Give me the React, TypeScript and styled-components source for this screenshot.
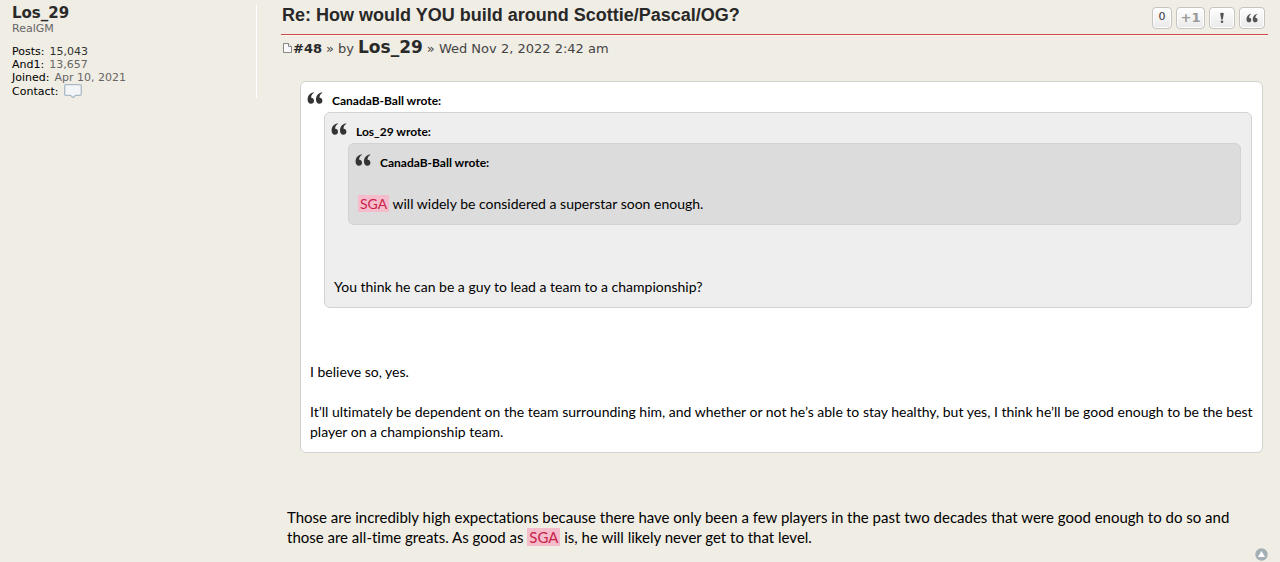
import React from "react";
import styled, { createGlobalStyle } from "styled-components";

const GlobalStyle = createGlobalStyle`
  *, *::before, *::after { box-sizing: border-box; }
  body {
    margin: 0;
    background: #f0ede4;
    color: #000;
    font-family: Verdana, "DejaVu Sans", sans-serif;
    font-size: 11px;
  }
`;

const Post = styled.article`
  display: flex;
  align-items: flex-start;
  gap: 24px;
  padding: 5px 12px 0;
`;

const Profile = styled.aside`
  flex: 0 0 245px;
  border-right: 1px solid #fff;
  color: #666;
`;

const UserLink = styled.a<{ $size: number }>`
  font-size: ${(p) => p.$size}px;
  font-weight: bold;
  color: #2a2a2a;
  text-decoration: none;
`;

const ProfileName = styled.div`
  line-height: 16px;
`;

const Rank = styled.div`
  line-height: 11px;
  margin-bottom: 11px;
`;

const Facts = styled.dl`
  margin: 0;
`;

const Fact = styled.div`
  display: flex;
  align-items: center;
  gap: 5px;
  line-height: 13px;
`;

const Label = styled.dt`
  color: #000;
`;

const Value = styled.dd<{ $dark?: boolean }>`
  margin: 0;
  color: ${(p) => (p.$dark ? "#333" : "#666")};
`;

const IconLink = styled.a`
  display: flex;
  color: inherit;
`;

const Body = styled.div`
  flex: 1;
  min-width: 0;
`;

const Header = styled.header`
  display: flex;
  justify-content: space-between;
  align-items: flex-start;
  height: 30px;
  padding-left: 1px;
  border-bottom: 1px solid #cc4a48;
  box-shadow: 0 1px 0 #faf8f3;
`;

const Title = styled.h3`
  margin: 0;
  font: bold 18px/20px Arial, "Liberation Sans", sans-serif;
  color: #282828;
`;

const Actions = styled.div`
  display: flex;
  gap: 4px;
  padding: 2px 3px 0 0;
`;

const ActionButton = styled.button<{ $width: number }>`
  display: flex;
  align-items: center;
  justify-content: center;
  width: ${(p) => p.$width}px;
  height: 22px;
  padding: 0;
  border: 1px solid #c7c3bf;
  border-radius: 4px;
  background: linear-gradient(#fff, #e9e9e9);
  box-shadow: inset 0 0 0 1px #fff;
  font: 11px/16px "DejaVu Sans", sans-serif;
  color: #333;
`;

const Count = styled.span`
  padding-bottom: 2px;
`;

const PlusOne = styled.strong`
  font-size: 13px;
  color: #999;
`;

const Byline = styled.p`
  display: flex;
  align-items: baseline;
  margin: 0;
  padding-left: 2px;
  line-height: 24px;
  font-size: 13px;
  color: #444;
`;

const BylineText = styled.span`
  margin: 0 4px;
`;

const Content = styled.div`
  padding: 20px 5px 0 6px;
  font: 15px/20px "Trebuchet MS", Lato, sans-serif;
  font-variant-ligatures: none;
`;

const Quote = styled.blockquote<{ $tone: string }>`
  margin: 0;
  padding: 8px 6px 10px 9px;
  border: 1px solid #d2d2d2;
  border-radius: 6px;
  background: ${(p) => p.$tone};
  font-size: 14px;

  & & {
    margin: 0 4px 0 14px;
  }
`;

const OuterQuote = styled.div`
  margin-left: 13px;
`;

const Cite = styled.cite`
  display: flex;
  gap: 9px;
  line-height: 22px;
  font-size: 12px;
  font-style: normal;
  font-weight: bold;
  margin-left: -3px;
`;

const Paragraph = styled.p<{ $before: number }>`
  margin: ${(p) => p.$before}px 0 0;
`;

const Marked = styled.mark`
  padding: 0 2px;
  background: #f5bccb;
  color: #c8234a;
`;

const PageTop = styled.div`
  display: flex;
  justify-content: flex-end;
  padding-top: 1px;
`;

const QuoteMark = ({ size, color }: { size: number; color: string }) => (
  <svg width={size} height={size} viewBox="0 0 16 16" fill={color} aria-hidden="true">
    <path d="M6.600 2.200C2.800 3 .6 5.700 .6 9.600c0 2.500 1.200 4.200 3.300 4.200 1.800 0 3.100-1.300 3.100-3.100 0-1.700-1.200-2.900-2.800-2.900-.2-2 .8-3.800 2.700-4.700z" />
    <path d="M15 2.200C11.200 3 9 5.700 9 9.600c0 2.500 1.200 4.200 3.300 4.200 1.800 0 3.100-1.300 3.100-3.100 0-1.700-1.200-2.900-2.800-2.900-.2-2 .8-3.800 2.700-4.700z" />
  </svg>
);

const QuoteAuthor = ({ name }: { name: string }) => (
  <Cite>
    <QuoteMark size={16} color="#333" />
    {name} wrote:
  </Cite>
);

export default function App() {
  return (
    <>
      <GlobalStyle />
      <Post>
        <Profile>
          <ProfileName>
            <UserLink href="#profile" $size={15}>Los_29</UserLink>
          </ProfileName>
          <Rank>RealGM</Rank>
          <Facts>
            <Fact><Label>Posts:</Label><Value $dark>15,043</Value></Fact>
            <Fact><Label>And1:</Label><Value>13,657</Value></Fact>
            <Fact><Label>Joined:</Label><Value>Apr 10, 2021</Value></Fact>
            <Fact>
              <Label>Contact:</Label>
              <Value>
                <IconLink href="#contact" aria-label="Contact Los_29">
                  <svg width="18" height="14" viewBox="0 0 18 14">
                    <path d="M2 .7h14q1.300 0 1.300 1.300v8q0 1.300-1.300 1.300h-4.500L9.500 13.300h-1L6.500 11.300H2Q.7 11.300 .7 10V2Q.7 .7 2 .7z" fill="#f3f5f6" stroke="#a9bbc7" strokeWidth="1.300" />
                  </svg>
                </IconLink>
              </Value>
            </Fact>
          </Facts>
        </Profile>
        <Body>
          <Header>
            <Title>Re: How would YOU build around Scottie/Pascal/OG?</Title>
            <Actions>
              <ActionButton $width={20}><Count>0</Count></ActionButton>
              <ActionButton $width={29}><PlusOne>+1</PlusOne></ActionButton>
              <ActionButton $width={26} aria-label="Report post">
                <svg width="6" height="12" viewBox="0 0 6 12" fill="#555">
                  <path d="M1.200 1.500Q1.200 .8 3 .8T4.800 1.500L3.800 7.500H2.200z" />
                  <circle cx="3" cy="9.800" r="1.300" />
                </svg>
              </ActionButton>
              <ActionButton $width={26} aria-label="Reply with quote">
                <QuoteMark size={12} color="#555" />
              </ActionButton>
            </Actions>
          </Header>
          <Byline>
            <IconLink href="#post" aria-label="Post">
              <svg width="10" height="10" viewBox="0 0 10 10" fill="#fafafa" stroke="#888">
                <path d="M.5 .5h5l3 3v6h-8z" />
                <path d="M5.500 .5v3h3" />
              </svg>
            </IconLink>
            <UserLink href="#48" $size={13}>#48</UserLink>
            <BylineText>» by</BylineText>
            <UserLink href="#profile" $size={17}>Los_29</UserLink>
            <BylineText>» Wed Nov 2, 2022 2:42 am</BylineText>
          </Byline>
          <Content>
            <OuterQuote>
              <Quote $tone="#fff">
                <QuoteAuthor name="CanadaB-Ball" />
                <Quote $tone="#eee">
                  <QuoteAuthor name="Los_29" />
                  <Quote $tone="#dcdcdc">
                    <QuoteAuthor name="CanadaB-Ball" />
                    <Paragraph $before={20}>
                      <Marked>SGA</Marked> will widely be considered a superstar soon enough.
                    </Paragraph>
                  </Quote>
                  <Paragraph $before={52}>
                    You think he can be a guy to lead a team to a championship?
                  </Paragraph>
                </Quote>
                <Paragraph $before={54}>I believe so, yes.</Paragraph>
                <Paragraph $before={20}>
                  It’ll ultimately be dependent on the team surrounding him, and whether or not he’s able to stay healthy, but yes, I think he’ll be good enough to be the best player on a championship team.
                </Paragraph>
              </Quote>
            </OuterQuote>
            <Paragraph $before={54}>
              Those are incredibly high expectations because there have only been a few players in the past two decades that were good enough to do so and those are all-time greats. As good as <Marked>SGA</Marked> is, he will likely never get to that level.
            </Paragraph>
          </Content>
          <PageTop>
            <IconLink href="#top" aria-label="Top">
              <svg width="13" height="13" viewBox="0 0 13 13">
                <circle cx="6.500" cy="6.500" r="6.200" fill="#a4afb6" />
                <path d="M6.500 3 10 9H3z" fill="#fff" />
              </svg>
            </IconLink>
          </PageTop>
        </Body>
      </Post>
    </>
  );
}
